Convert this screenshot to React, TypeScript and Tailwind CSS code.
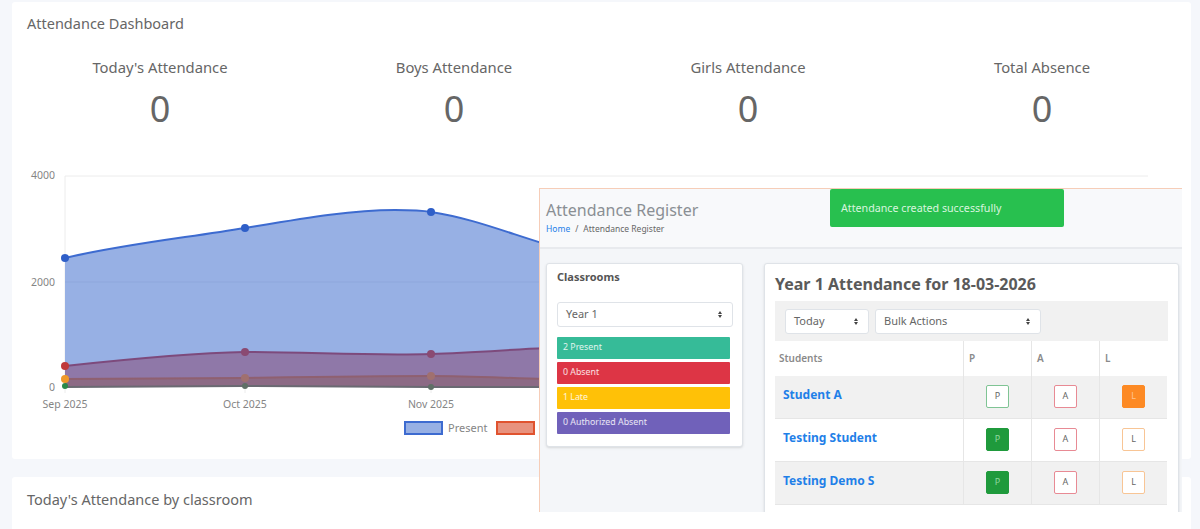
const font = { fontFamily: '"Noto Sans", sans-serif' };

const stats = [
  { label: "Today's Attendance", value: 0 },
  { label: 'Boys Attendance', value: 0 },
  { label: 'Girls Attendance', value: 0 },
  { label: 'Total Absence', value: 0 },
];

const badges = [
  { label: '2 Present', tone: 'bg-[#36bb98]' },
  { label: '0 Absent', tone: 'bg-[#dd3545]' },
  { label: '1 Late', tone: 'bg-[#ffc107]' },
  { label: '0 Authorized Absent', tone: 'bg-[#7061ba]' },
];

const students = [
  { name: 'Student A', mark: 'L', shaded: true },
  { name: 'Testing Student', mark: 'P', shaded: false },
  { name: 'Testing Demo S', mark: 'P', shaded: true },
];

function Chart() {
  return (
    <svg width="1179" height="280" viewBox="12 165 1179 280" className="block">
      <line x1="65" y1="176" x2="1148" y2="176" stroke="#ececec" />
      <line x1="65" y1="282" x2="1148" y2="282" stroke="#ececec" />
      <line x1="65" y1="176" x2="65" y2="393" stroke="#ececec" />
      <line x1="245" y1="387" x2="245" y2="393" stroke="#ececec" />
      <line x1="431" y1="387" x2="431" y2="393" stroke="#ececec" />
      <g fill="#858585" fontSize="10.5" style={font}>
        <text x="55" y="179" textAnchor="end">4000</text>
        <text x="55" y="286" textAnchor="end">2000</text>
        <text x="55" y="391" textAnchor="end">0</text>
        <text x="65" y="408" textAnchor="middle">Sep 2025</text>
        <text x="245" y="408" textAnchor="middle">Oct 2025</text>
        <text x="431" y="408" textAnchor="middle">Nov 2025</text>
      </g>
      <path
        d="M65 258 C125 244 185 238 245 228 C305 218 350 210 395 210 C410 210 420 210 431 212 C470 218 500 230 545 244 L545 387 L65 387 Z"
        fill="#97b0e4"
      />
      <path
        d="M65 258 C125 244 185 238 245 228 C305 218 350 210 395 210 C410 210 420 210 431 212 C470 218 500 230 545 244"
        fill="none"
        stroke="#3d6bd0"
        strokeWidth="2"
      />
      <line x1="65" y1="282" x2="545" y2="282" stroke="#8ea7dc" />
      <path
        d="M65 366 C120 360 190 353 245 352 C310 352 370 356 431 354 C470 353 505 350 545 348 L545 387 L65 387 Z"
        fill="#8f78a8"
      />
      <path
        d="M65 366 C120 360 190 353 245 352 C310 352 370 356 431 354 C470 353 505 350 545 348"
        fill="none"
        stroke="#7d4a7c"
        strokeWidth="2"
      />
      <path d="M65 379 C120 379 190 378 245 378 C310 377 370 376 431 376 C470 376 505 378 545 379 L545 387 L65 387 Z" fill="#8c6a85" />
      <path d="M65 379 C120 379 190 378 245 378 C310 377 370 376 431 376 C470 376 505 378 545 379" fill="none" stroke="#8f6070" strokeWidth="2" />
      <path d="M65 387 L245 386 L431 387 L545 387" fill="none" stroke="#6a6a72" strokeWidth="2" />
      <circle cx="245" cy="228" r="4" fill="#2f5fc8" />
      <circle cx="431" cy="212" r="4" fill="#2f5fc8" />
      <circle cx="65" cy="258" r="4" fill="#2f5fc8" />
      <circle cx="65" cy="366" r="4" fill="#c0393b" />
      <circle cx="245" cy="352" r="4" fill="#8a4a72" />
      <circle cx="431" cy="354" r="4" fill="#8a4a72" />
      <circle cx="65" cy="379" r="4" fill="#f09a2a" />
      <circle cx="245" cy="378" r="4" fill="#a0706f" />
      <circle cx="431" cy="376" r="4" fill="#a0706f" />
      <circle cx="65" cy="386" r="3" fill="#2a8a4a" />
      <circle cx="245" cy="386" r="3" fill="#5f6f66" />
      <circle cx="431" cy="387" r="3" fill="#5f6f66" />
    </svg>
  );
}

function Legend() {
  return (
    <div className="ml-[392px] flex items-center text-[11px] text-[#858585]">
      <span className="h-[14px] w-[39px] border-2 border-[#3d6bd0] bg-[#97b0e4]" />
      <span className="ml-[5px] w-[48px]">Present</span>
      <span className="h-[14px] w-[39px] border-2 border-[#e0532f] bg-[#e8927e]" />
    </div>
  );
}

function FakeSelect({ label, className }: { label: string; className: string }) {
  return (
    <div
      className={`flex items-center justify-between rounded-[3px] border border-[#dfe3e8] bg-white pl-2 pr-[10px] text-[11px] text-[#666] ${className}`}
    >
      <span>{label}</span>
      <span className="flex flex-col gap-[1px]">
        <span className="h-0 w-0 border-x-[2.5px] border-b-[3px] border-x-transparent border-b-[#444]" />
        <span className="h-0 w-0 border-x-[2.5px] border-t-[3px] border-x-transparent border-t-[#444]" />
      </span>
    </div>
  );
}

function MarkButton({ letter, active, tone }: { letter: string; active: boolean; tone: 'P' | 'A' | 'L' }) {
  const palette = {
    P: active ? 'border-[#1f9a3c] bg-[#1f9a3c] text-[#8fd8a0]' : 'border-[#7fc494] bg-white text-[#666]',
    A: 'border-[#e88a94] bg-white text-[#666]',
    L: active ? 'border-[#fd8a24] bg-[#fd8a24] text-[#fdc592]' : 'border-[#f8c595] bg-white text-[#666]',
  }[tone];
  return (
    <span className={`flex h-[23px] w-[23px] items-center justify-center rounded-[2px] border text-[9px] ${palette}`}>
      {letter}
    </span>
  );
}

function StudentRow({ name, mark, shaded }: { name: string; mark: string; shaded: boolean }) {
  return (
    <div className={`flex h-[43px] border-b border-[#e6e6e6] ${shaded ? 'bg-[#f1f1f1]' : 'bg-white'}`}>
      <div className="w-[188px] pl-2 pt-[10px] text-[12px] font-bold text-[#1f80e8]">{name}</div>
      {(['P', 'A', 'L'] as const).map((col) => (
        <div key={col} className="flex flex-1 items-center justify-center border-l border-[#e6e6e6] pb-[2px]">
          <MarkButton letter={col} active={mark === col} tone={col} />
        </div>
      ))}
    </div>
  );
}

function RegisterOverlay() {
  return (
    <div className="absolute left-[539px] top-[188px] flex h-[324px] w-[643px] flex-col overflow-hidden border-l border-t border-[#f6cdb8] bg-[#f4f6f9]">
      <div className="relative h-[60px] shrink-0 border-b-2 border-[#e8eaee] bg-[#f8f9fb] pl-[6px] pt-[10px]">
        <h2 className="text-[16px] leading-[22px] text-[#8a8f94]">Attendance Register</h2>
        <p className="mt-[2px] text-[8.5px] leading-[12px] text-[#666]">
          <span className="text-[#1f80e8]">Home</span>
          <span className="mx-[5px]">/</span>
          Attendance Register
        </p>
        <div className="absolute left-[290px] top-0 flex h-[38px] w-[234px] items-center rounded-[2px] bg-[#28c04f] pl-[11px] text-[10.7px] text-[#d8f5df]">
          Attendance created successfully
        </div>
      </div>
      <div className="flex items-start pl-[6px] pt-[14px]">
        <div className="h-[184px] w-[197px] rounded-[3px] border border-[#dfe3e8] bg-white px-[10px] pt-[5px] shadow-sm">
          <h3 className="text-[11px] font-bold leading-[16px] text-[#555]">Classrooms</h3>
          <FakeSelect label="Year 1" className="mt-[17px] h-[25px] w-[176px]" />
          <div className="mt-[10px] flex w-[173px] flex-col gap-[3px]">
            {badges.map((b) => (
              <div key={b.label} className={`flex h-[22px] items-center rounded-[1px] pl-[6px] text-[8.8px] text-white/85 ${b.tone}`}>
                {b.label}
              </div>
            ))}
          </div>
        </div>
        <div className="ml-[21px] h-[300px] w-[415px] rounded-[3px] border border-[#dfe3e8] bg-white px-[10px] pt-[8px] shadow-sm">
          <h3 className="text-[16px] font-bold leading-[24px] text-[#5a5a5a]">Year 1 Attendance for 18-03-2026</h3>
          <div className="mt-[5px] flex h-[40px] items-center gap-[6px] bg-[#f1f1f1] pl-[10px]">
            <FakeSelect label="Today" className="h-[25px] w-[84px]" />
            <FakeSelect label="Bulk Actions" className="h-[25px] w-[166px]" />
          </div>
          <div className="w-[392px]">
            <div className="flex h-[35px] items-center bg-white text-[10px] font-semibold text-[#8a8a8a]">
              <div className="w-[188px] pl-1">Students</div>
              {['P', 'A', 'L'].map((h) => (
                <div key={h} className="flex h-full flex-1 items-center border-l border-[#e6e6e6] pl-[5px]">
                  {h}
                </div>
              ))}
            </div>
            {students.map((s) => (
              <StudentRow key={s.name} {...s} />
            ))}
          </div>
        </div>
      </div>
    </div>
  );
}

export default function App() {
  return (
    <div className="relative h-[529px] overflow-hidden bg-[#f5f7fb] pl-3 pt-[2px]" style={font}>
      <section className="h-[457px] w-[1179px] rounded-[3px] bg-white">
        <h1 className="pl-[15px] pt-[11px] text-[14.5px] leading-[20px] text-[#666]">Attendance Dashboard</h1>
        <div className="ml-px mt-[24px] grid w-[1176px] grid-cols-4">
          {stats.map((s) => (
            <div key={s.label} className="text-center text-[#666]">
              <p className="text-[14.8px] leading-[20px]">{s.label}</p>
              <p className="mt-[8px] text-[36px] leading-[48px]">{s.value}</p>
            </div>
          ))}
        </div>
        <div className="mt-[32px]">
          <Chart />
        </div>
        <div className="-mt-[25px]">
          <Legend />
        </div>
      </section>
      <section className="mt-[18px] h-[60px] w-[1179px] rounded-[3px] bg-white">
        <h2 className="pl-[15px] pt-[12px] text-[14.5px] leading-[20px] text-[#666]">Today's Attendance by classroom</h2>
      </section>
      <RegisterOverlay />
    </div>
  );
}
